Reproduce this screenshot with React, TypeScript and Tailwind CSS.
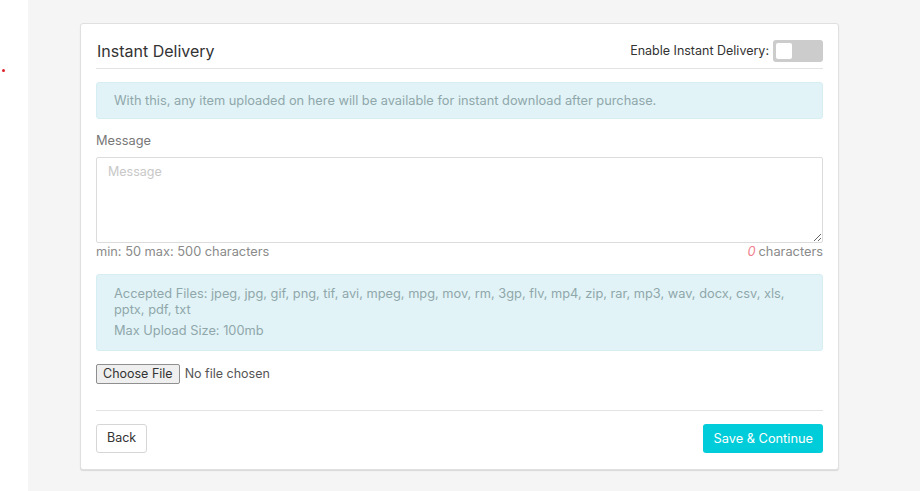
export default function App() {
  return (
    <div className="flex min-h-[491px] w-full font-['Inter',sans-serif]">
      {/* left strip */}
      <div className="relative w-[28px] shrink-0 bg-white">
        <span className="absolute left-[2px] top-[69px] h-[3px] w-[3px] rounded-full bg-[#e0202a]" />
      </div>

      <div className="flex-1 bg-[#f5f5f5] pt-[23px] pb-[21px]">
        <div className="ml-[52px] w-[759px] rounded-[3px] border border-[#e0e0e0] bg-white px-[15px] pb-[16px] shadow-[0_1px_1px_rgba(0,0,0,0.12)]">
          {/* Header */}
          <div className="flex h-[45px] items-end border-b border-[#e3e3e3] pb-[6px]">
            <div className="flex h-[22px] w-full items-center justify-between">
              <h2 className="pl-[1px] text-[16px] leading-none text-[#333]">Instant Delivery</h2>
              <div className="flex items-center gap-[4px]">
                <span className="text-[12.5px] text-[#333]">Enable Instant Delivery:</span>
                <div className="flex h-[22px] w-[50px] items-center rounded-[3px] bg-[#cccccc] px-[3px]">
                  <div className="h-[16px] w-[16px] rounded-[2px] bg-white" />
                </div>
              </div>
            </div>
          </div>

          {/* Info */}
          <div className="mt-[13px] flex h-[37px] items-center rounded-[3px] border border-[#d6eef2] bg-[#e1f3f6] px-[17px]">
            <p className="text-[12.8px] text-[#8fa7ab]">
              With this, any item uploaded on here will be available for instant download after purchase.
            </p>
          </div>

          {/* Message */}
          <label className="mt-[12px] block text-[12.8px] leading-[20px] text-[#777]">Message</label>
          <textarea
            placeholder="Message"
            className="mt-[6px] block h-[86px] w-full resize-y rounded-[2px] border border-[#dcdcdc] px-[11px] py-[5px] text-[12.5px] text-[#555] outline-none placeholder:text-[#c8c8c8]"
          />
          <div className="mt-[1px] flex justify-between text-[12.8px] leading-[16px] text-[#8a8a8a]">
            <span>min: 50 max: 500 characters</span>
            <span>
              <i className="mr-[3px] text-[#f07f8f]">0</i>characters
            </span>
          </div>

          {/* Accepted files */}
          <div className="mt-[14px] rounded-[3px] border border-[#d6eef2] bg-[#e1f3f6] px-[17px] pt-[11px] pb-[11px] text-[12.8px] leading-[16px] text-[#8fa7ab]">
            <p>
              Accepted Files: jpeg, jpg, gif, png, tif, avi, mpeg, mpg, mov, rm, 3gp, flv, mp4, zip, rar, mp3, wav, docx, csv, xls,
              <br />
              pptx, pdf, txt
            </p>
            <p className="mt-[5px]">Max Upload Size: 100mb</p>
          </div>

          {/* File input */}
          <div className="mt-[13px] flex items-center gap-[5px] text-[12.5px] text-[#555]">
            <button className="h-[20px] rounded-[2px] border border-[#8f8f8f] bg-[#efefef] px-[6px] text-[12.5px] leading-none text-[#333]">
              Choose File
            </button>
            <span>No file chosen</span>
          </div>

          {/* Footer */}
          <div className="mt-[26px] flex items-center justify-between border-t border-[#e3e3e3] pt-[13px]">
            <button className="h-[29px] rounded-[3px] border border-[#d6d6d6] bg-white px-[10px] text-[12.5px] text-[#333]">
              Back
            </button>
            <button className="h-[29px] rounded-[3px] bg-[#00cdd9] px-[10px] text-[12.8px] text-white">
              Save &amp; Continue
            </button>
          </div>
        </div>
      </div>
    </div>
  )
}
